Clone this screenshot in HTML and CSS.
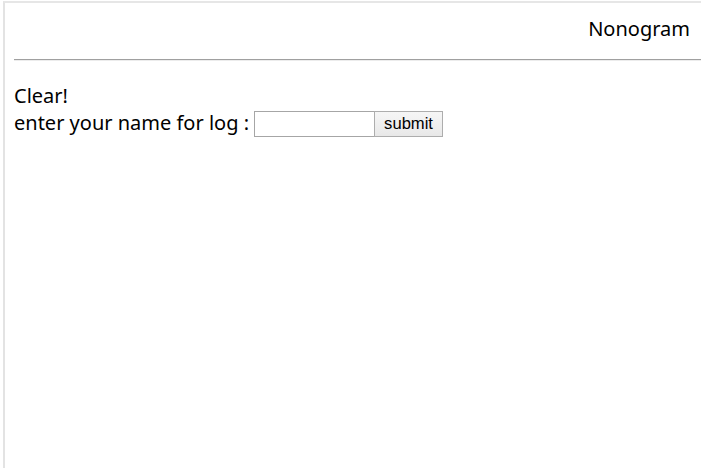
FILE: index.html
```html
<!DOCTYPE html>
<html>
<head>
<meta charset="utf-8">
<title>Nonogram</title>
<link rel="stylesheet" href="styles.css">
</head>
<body>
<div class="frame">
  <div class="header">Nonogram</div>
  <hr class="rule">
  <div class="content">
    <div class="line">Clear!</div>
    <form class="log-row">
      <span class="label">enter your name for log :</span>
      <input class="name-input" type="text">
      <button class="submit-btn" type="button">submit</button>
    </form>
  </div>
</div>
</body>
</html>
```
FILE: styles.css
```css
html, body {
  margin: 0;
  height: 100%;
  background: #ffffff;
}
body {
  padding: 1px 0 0 3px;
  box-sizing: border-box;
  font-family: "Noto Sans", "Open Sans", "Liberation Sans", sans-serif;
  font-size: 20px;
  color: #000;
  overflow: hidden;
}
.frame {
  height: 100%;
  box-sizing: border-box;
  border-top: 2px solid #e6e6e6;
  border-left: 2px solid #e3e3e3;
}
.header {
  padding: 12px 11px 0 9px;
  text-align: right;
  line-height: 27px;
}
.rule {
  margin: 17px 0 0 9px;
  height: 0;
  border: 0;
  border-top: 1px solid #a0a0a0;
  border-bottom: 1px solid #ececec;
}
.content {
  padding: 21px 0 0 9px;
}
.line {
  line-height: 27px;
}
.log-row {
  margin: 0;
  display: flex;
  align-items: center;
  height: 27px;
}
.label {
  line-height: 27px;
}
.name-input {
  margin: 3px 0 0 5px;
  width: 121px;
  height: 26px;
  box-sizing: border-box;
  border: 1px solid #a6a6a6;
  padding: 0 3px;
  font-family: "Liberation Sans", Arial, sans-serif;
  font-size: 16px;
  background: #fff;
  outline: none;
}
.submit-btn {
  margin: 3px 0 0 -1px;
  width: 69px;
  height: 26px;
  box-sizing: border-box;
  border: 1px solid #adadad;
  background: linear-gradient(#f6f6f6, #e8e8e8);
  font-family: "Liberation Sans", Arial, sans-serif;
  font-size: 16.6px;
  color: #000;
  padding: 0;
}
```
